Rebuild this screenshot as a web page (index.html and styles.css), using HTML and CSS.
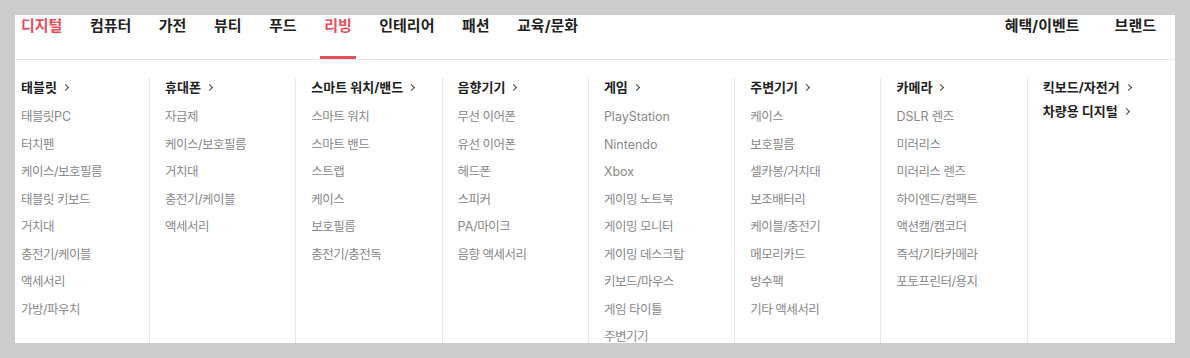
FILE: index.html
```html
<!DOCTYPE html>
<html lang="ko">
<head>
  <meta charset="UTF-8" />
  <title>카테고리 메뉴</title>
  <link rel="stylesheet" href="styles.css">
</head>
<body>

<div class="panel">
  <nav class="gnb">
    <ul class="gnb-main">
      <li class="hot">디지털</li>
      <li>컴퓨터</li>
      <li>가전</li>
      <li>뷰티</li>
      <li>푸드</li>
      <li class="hot active">리빙</li>
      <li>인테리어</li>
      <li>패션</li>
      <li>교육/문화</li>
    </ul>
    <ul class="gnb-side">
      <li>혜택/이벤트</li>
      <li>브랜드</li>
    </ul>
  </nav>

  <div class="mega">
    <div class="col first">
      <h3>태블릿</h3>
      <ul>
        <li>태블릿<span class="en">PC</span></li>
        <li>터치펜</li>
        <li>케이스/보호필름</li>
        <li>태블릿 키보드</li>
        <li>거치대</li>
        <li>충전기/케이블</li>
        <li>액세서리</li>
        <li>가방/파우치</li>
      </ul>
    </div>
    <div class="col">
      <h3>휴대폰</h3>
      <ul>
        <li>자급제</li>
        <li>케이스/보호필름</li>
        <li>거치대</li>
        <li>충전기/케이블</li>
        <li>액세서리</li>
      </ul>
    </div>
    <div class="col">
      <h3>스마트 워치/밴드</h3>
      <ul>
        <li>스마트 워치</li>
        <li>스마트 밴드</li>
        <li>스트랩</li>
        <li>케이스</li>
        <li>보호필름</li>
        <li>충전기/충전독</li>
      </ul>
    </div>
    <div class="col">
      <h3>음향기기</h3>
      <ul>
        <li>무선 이어폰</li>
        <li>유선 이어폰</li>
        <li>헤드폰</li>
        <li>스피커</li>
        <li><span class="en">PA</span>/마이크</li>
        <li>음향 액세서리</li>
      </ul>
    </div>
    <div class="col">
      <h3>게임</h3>
      <ul>
        <li class="en">PlayStation</li>
        <li class="en">Nintendo</li>
        <li class="en">Xbox</li>
        <li>게이밍 노트북</li>
        <li>게이밍 모니터</li>
        <li>게이밍 데스크탑</li>
        <li>키보드/마우스</li>
        <li>게임 타이틀</li>
        <li>주변기기</li>
      </ul>
    </div>
    <div class="col">
      <h3>주변기기</h3>
      <ul>
        <li>케이스</li>
        <li>보호필름</li>
        <li>셀카봉/거치대</li>
        <li>보조배터리</li>
        <li>케이블/충전기</li>
        <li>메모리카드</li>
        <li>방수팩</li>
        <li>기타 액세서리</li>
      </ul>
    </div>
    <div class="col">
      <h3>카메라</h3>
      <ul>
        <li><span class="en">DSLR</span> 렌즈</li>
        <li>미러리스</li>
        <li>미러리스 렌즈</li>
        <li>하이엔드/컴팩트</li>
        <li>액션캠/캠코더</li>
        <li>즉석/기타카메라</li>
        <li>포토프린터/용지</li>
      </ul>
    </div>
    <div class="col">
      <h3>킥보드/자전거</h3>
      <h3>차량용 디지털</h3>
    </div>
  </div>
</div>

</body>
</html>
```

FILE: styles.css
```css
body {
  font-family: Inter, 'Noto Sans CJK KR', sans-serif;
  margin: 0; padding: 0;
  background: #cccccc;
  overflow: hidden;
}
ul {
  list-style: none;
  margin: 0; padding: 0;
}
.panel {
  margin: 15px 0 0 15px;
  width: 1160px;
  height: 328px;
  background: white;
  overflow: hidden;
}
.gnb {
  display: flex;
  justify-content: space-between;
  height: 44px;
  padding: 0 15px 0 2px;
  border-bottom: 1px solid #e6e6e6;
}
.gnb ul {
  display: flex;
  gap: 19.5px;
}
.gnb-side {
  gap: 27px !important;
}
.gnb li {
  padding: 0 4px;
  font-size: 15px;
  font-weight: bold;
  line-height: 22px;
  color: #222;
  box-sizing: border-box;
  height: 44px;
}
.gnb li.hot {
  color: #e5505a;
}
.gnb li.active {
  border-bottom: 3px solid #e5505a;
}
.mega {
  display: grid;
  grid-template-columns: 134px repeat(7, 146.3px);
  padding-top: 18px;
  height: 100%;
}
.col {
  border-left: 1px solid #e9e9e9;
  padding-left: 15px;
}
.col.first {
  border-left: none;
  padding-left: 6px;
}
.col h3 {
  margin: 0 0 7px;
  font-size: 13px;
  font-weight: bold;
  line-height: 18px;
  color: #222;
}
.col h3 + h3 {
  margin-top: -1px;
}
.col h3::after {
  content: '';
  display: inline-block;
  width: 4px; height: 4px;
  margin: 0 0 2px 6px;
  border-top: 1.1px solid #444;
  border-right: 1.1px solid #444;
  transform: rotate(45deg);
}
.col li {
  font-size: 12.5px;
  letter-spacing: -0.5px;
  line-height: 27.5px;
  color: #888;
  white-space: nowrap;
}
.col .en {
  font-size: 12.5px;
  letter-spacing: 0;
}
```
